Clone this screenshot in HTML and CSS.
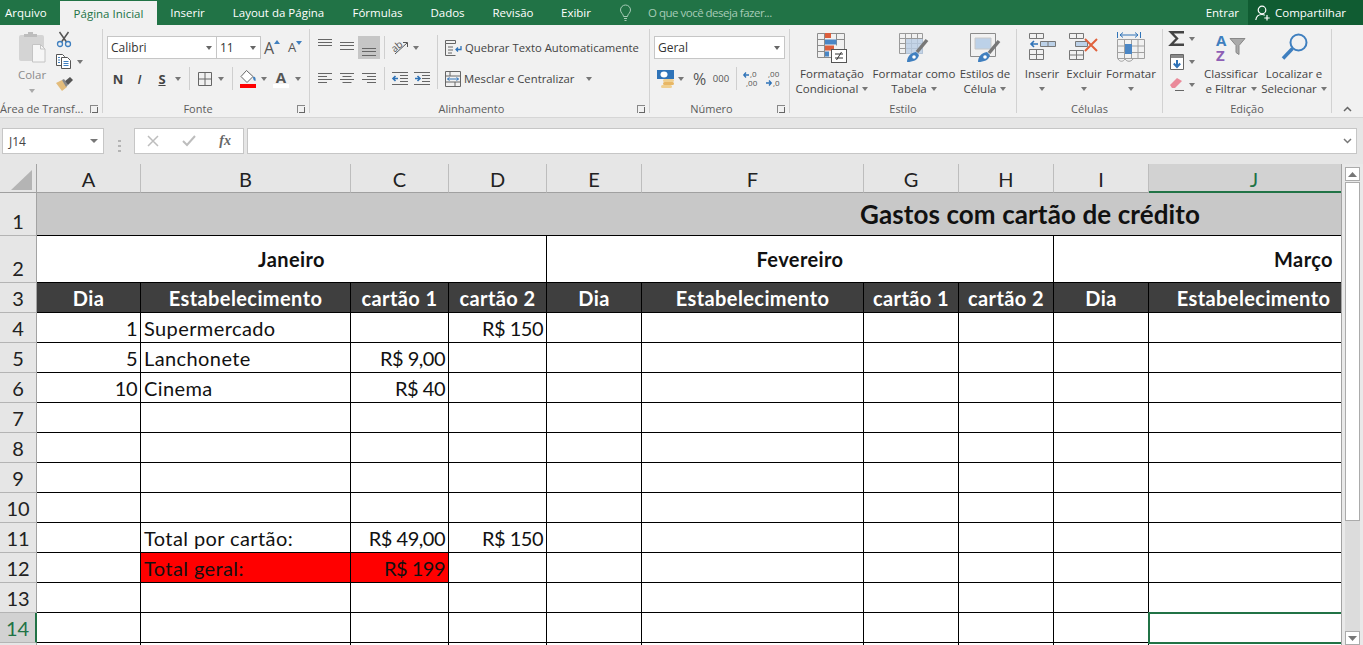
FILE: index.html
```html
<!DOCTYPE html>
<html lang="pt-BR">
<head>
<meta charset="utf-8">
<title>Gastos com cartão de crédito - Excel</title>
<link rel="stylesheet" href="styles.css">
</head>
<body>
<div class="app">
  <header class="titlebar">
    <nav class="tabs">
      <span class="tab tab-file">Arquivo</span>
      <span class="tab tab-active">Página Inicial</span>
      <span class="tab">Inserir</span>
      <span class="tab">Layout da Página</span>
      <span class="tab">Fórmulas</span>
      <span class="tab">Dados</span>
      <span class="tab">Revisão</span>
      <span class="tab">Exibir</span>
    </nav>
    <div class="tellme">
      <svg width="11" height="16" viewBox="0 0 11 16" fill="none" stroke="#a6cbb6"><path d="M3.5 11.5C3.5 9 .5 8 .5 5a5 5 0 0 1 10 0c0 3-3 4-3 6.5zM4 13.5h3M4.5 15.5h2"/></svg>
      <span>O que você deseja fazer...</span>
    </div>
    <div class="account">
      <span class="signin">Entrar</span>
      <span class="share">
        <svg width="16" height="16" viewBox="0 0 16 16" fill="none" stroke="#fff" stroke-width="1.2"><circle cx="7" cy="5" r="3.8"/><path d="M.8 15c.4-3.5 3-5.5 6.2-5.5 1.2 0 2 .2 2.8.7M12 10v5.5M9.3 13h5.4"/></svg>
        Compartilhar
      </span>
    </div>
  </header>

  <div class="ribbon">
    <section class="group g-clip">
      <div class="body clip-body">
        <div class="big paste">
          <svg class="big-icon" width="30" height="32" viewBox="0 0 30 32"><rect x="2" y="4" width="25" height="26" rx="2" fill="#d4d4d4"/><path d="M7 6V3h4V1h5v2h4v3z" fill="#bdbdbd"/><path d="M15.5 13.5h8l4.5 4.500V31h-12.500z" fill="#f6f6f6" stroke="#c4c4c4"/><path d="M23.500 13.500v4.500H28" fill="none" stroke="#c4c4c4"/></svg>
          <span class="muted">Colar</span>
          <i class="caret caret-low"></i>
        </div>
        <div class="stack">
          <div class="stack-row">
            <svg width="16" height="16" viewBox="0 0 16 16" fill="none"><path d="M3.500 1l7 10M12.500 1l-7 10" stroke="#555" stroke-width="1.500"/><circle cx="4" cy="13" r="2.500" stroke="#3f7fbf" stroke-width="1.300"/><circle cx="12" cy="13" r="2.500" stroke="#3f7fbf" stroke-width="1.300"/></svg>
          </div>
          <div class="stack-row copy-row">
            <svg width="16" height="15" viewBox="0 0 16 15" fill="#fff"><path d="M.5.5h6l2 2v9H.5z" stroke="#555"/><path d="M5.500 3.500h6l3 3v8h-9z" stroke="#555"/><path d="M2 3.500h2M2 6h2M2 8.500h2M7.500 7.500h5M7.500 9.500h5M7.500 11.500h5" stroke="#3f7fbf" fill="none"/></svg>
            <i class="caret"></i>
          </div>
          <div class="stack-row">
            <svg width="17" height="15" viewBox="0 0 17 15"><path d="M0 6l6-3 5 7-5 4z" fill="#e3bc7b"/><path d="M8 5l6-5 3 3-5 5z" fill="#555"/><path d="M6 3l2-1 4 6-2 2z" fill="#888"/></svg>
          </div>
        </div>
      </div>
      <div class="label label-launch label-clip">Área de Transf...<i class="launch"></i></div>
    </section>

    <section class="group g-font">
      <div class="body pad4">
        <div class="tool-row font-top">
          <span class="combo combo-font">Calibri<i class="caret"></i></span>
          <span class="combo combo-size">11<i class="caret"></i></span>
          <span class="grow-a">A<svg width="6" height="4" viewBox="0 0 6 4"><path d="M0 4l3-4 3 4z" fill="#3f7fbf"/></svg></span>
          <span class="shrink-a">A<svg width="6" height="4" viewBox="0 0 6 4"><path d="M0 0l3 4 3-4z" fill="#3f7fbf"/></svg></span>
        </div>
        <div class="tool-row font-bottom">
          <b class="fmt">N</b>
          <em class="fmt">I</em>
          <b class="fmt under">S</b>
          <i class="caret"></i>
          <i class="vsep"></i>
          <svg width="15" height="14" viewBox="0 0 15 14" fill="none" stroke="#666"><path d="M.5.5h13v13H.5zM7 .5v13M.5 7h13"/></svg>
          <i class="caret"></i>
          <i class="vsep"></i>
          <svg width="16" height="18" viewBox="0 0 16 18"><path d="M6.500.500l-5.500 6 6 6 6-6z" fill="#fff" stroke="#666"/><path d="M13 7c2-1 3 1 2.500 4-1 0-2.500-1-2.500-4z" fill="#3f7fbf"/><rect y="14" width="16" height="4" fill="#ff0000"/></svg>
          <i class="caret"></i>
          <span class="color-a">A<i></i></span>
          <i class="caret"></i>
        </div>
      </div>
      <div class="label label-launch">Fonte<i class="launch"></i></div>
    </section>

    <section class="group g-align">
      <div class="body pad4 align-body">
        <div class="align-tools">
          <div class="tool-row align-top">
            <svg class="lines" width="14" height="23" viewBox="0 0 14 23"><path d="M0 3.500h14M0 6.500h14M0 9.500h14"/></svg>
            <svg class="lines" width="14" height="23" viewBox="0 0 14 23"><path d="M0 6.500h14M0 9.500h14M0 13.500h14"/></svg>
            <span class="pressed"><svg class="lines" width="14" height="23" viewBox="0 0 14 23"><path d="M0 12.500h14M0 15.500h14M0 19.500h14"/></svg></span>
            <i class="vsep"></i>
            <svg width="16" height="15" viewBox="0 0 16 15" fill="none"><text x="0" y="10" transform="rotate(-40 5 8)" class="svg-small">ab</text><path d="M3 14L15 3M11 2.500h4.500V7" stroke="#555"/></svg>
            <i class="caret"></i>
          </div>
          <div class="tool-row align-bottom">
            <svg class="lines" width="14" height="12" viewBox="0 0 14 12"><path d="M0 .5h14M0 3.500h9M0 6.500h14M0 9.500h9"/></svg>
            <svg class="lines" width="14" height="12" viewBox="0 0 14 12"><path d="M0 .5h14M2.500 3.500h9M0 6.500h14M2.500 9.500h9"/></svg>
            <svg class="lines" width="14" height="12" viewBox="0 0 14 12"><path d="M0 .5h14M5 3.500h9M0 6.500h14M5 9.500h9"/></svg>
            <i class="vsep"></i>
            <svg width="16" height="13" viewBox="0 0 16 13" fill="none"><path d="M0 .5h16M8 3.500h8M8 6.500h8M8 9.500h8M0 12.500h16" stroke="#666"/><path d="M6 6.500H1M3.500 4L1 6.500 3.500 9" stroke="#2f73b8" stroke-width="1.600"/></svg>
            <svg width="16" height="13" viewBox="0 0 16 13" fill="none"><path d="M0 .5h16M8 3.500h8M8 6.500h8M8 9.500h8M0 12.500h16" stroke="#666"/><path d="M1 6.500h5M3.500 4L6 6.500 3.500 9" stroke="#2f73b8" stroke-width="1.600"/></svg>
          </div>
        </div>
        <i class="vsep vsep-tall"></i>
        <div class="wrap-tools">
          <div class="wrap-row">
            <svg width="17" height="16" viewBox="0 0 17 16" fill="none"><path d="M.5.5h10v3H.5zM.5 3.500v12h10M3 7h5M3 10h5M3 13h4" stroke="#666"/><path d="M16 6v3.500h-5M13 7.500l-2 2 2 2" stroke="#2f73b8" stroke-width="1.300"/></svg>
            <span>Quebrar Texto Automaticamente</span>
          </div>
          <div class="wrap-row">
            <svg width="16" height="16" viewBox="0 0 16 16" fill="none"><path d="M.5.5h15v15H.5zM.5 5h15M.5 11h15M5 .5V5M10 11v4.500" stroke="#666"/><path d="M2.500 8h11M4.500 6.500L2.500 8l2 1.500M11.500 6.500l2 1.500-2 1.500" stroke="#2f73b8"/></svg>
            <span class="merge-text">Mesclar e Centralizar</span>
            <i class="caret caret-merge"></i>
          </div>
        </div>
      </div>
      <div class="label label-launch">Alinhamento<i class="launch"></i></div>
    </section>

    <section class="group g-number">
      <div class="body pad4">
        <div class="tool-row">
          <span class="combo combo-number">Geral<i class="caret"></i></span>
        </div>
        <div class="tool-row number-bottom">
          <svg width="17" height="18" viewBox="0 0 17 18"><rect width="17" height="9" fill="#2f73b8"/><ellipse cx="7" cy="4.500" rx="3.500" ry="3" fill="#fff"/><rect x="6" y="9" width="11" height="3" rx="1.500" fill="#f0cf8f"/><rect x="6" y="12" width="11" height="3" rx="1.500" fill="#e8b765"/><rect x="4" y="15" width="11" height="3" rx="1.500" fill="#f0cf8f"/></svg>
          <i class="caret"></i>
          <span class="pct">%</span>
          <span class="thousand">000</span>
          <i class="vsep"></i>
          <svg width="16" height="17" viewBox="0 0 16 17" fill="none"><text x="7" y="7" class="svg-tiny">,0</text><text x="3" y="16" class="svg-tiny">,00</text><path d="M6 5H1M3 2.500L.8 5 3 7.500" stroke="#2f73b8" stroke-width="1.300"/></svg>
          <svg width="16" height="17" viewBox="0 0 16 17" fill="none"><text x="3" y="7" class="svg-tiny">,00</text><text x="8" y="16" class="svg-tiny">,0</text><path d="M1 13h5M4 10.500L6.300 13 4 15.500" stroke="#2f73b8" stroke-width="1.300"/></svg>
        </div>
      </div>
      <div class="label label-launch">Número<i class="launch"></i></div>
    </section>

    <section class="group g-style">
      <div class="body bigs bigs-style">
        <div class="big">
          <svg class="big-icon" width="30" height="30" viewBox="0 0 30 30" fill="none"><path d="M.5.5h27v24H.5zM7.500.5v24M19.500.5v12M.5 6.500h7M.5 12.500h7M.5 18.500h7M19.500 6.500h8" stroke="#8c8c8c"/><rect x="8" y="0" width="6" height="5" fill="#dc5f3d"/><rect x="8" y="6.500" width="11.500" height="5" fill="#4a86c5"/><rect x="8" y="12.500" width="9" height="5" fill="#dc5f3d"/><rect x="8" y="18.500" width="4" height="5" fill="#4a86c5"/><rect x="14.500" y="16.500" width="15" height="13" fill="#fff" stroke="#555"/><path d="M18 21h8M18 25h8M24.500 19l-5 8" stroke="#333"/></svg>
          <span>Formatação</span>
          <span>Condicional<i class="caret caret-inline"></i></span>
        </div>
        <div class="big">
          <svg class="big-icon" width="30" height="30" viewBox="0 0 30 30" fill="none"><path d="M.5.500h23v20H.5zM.5 5.500h23M.5 10.500h23M.5 15.500h23M6.500.500v20M12.500.500v20M18.500.500v20" stroke="#9a9a9a"/><path d="M7 6h17v15H7z" fill="#b9cde5" fill-opacity=".8"/><path d="M28 7L18 19" stroke="#777" stroke-width="3.500"/><path d="M8 29c0-5 3-9 9-10l3 3c-1 5-6 7-12 7z" fill="#3f7fbf"/><circle cx="15" cy="24" r="1.800" fill="#fff"/></svg>
          <span>Formatar como</span>
          <span>Tabela<i class="caret caret-inline"></i></span>
        </div>
        <div class="big">
          <svg class="big-icon" width="30" height="30" viewBox="0 0 30 30" fill="none"><path d="M.5.500h25v23H.5z" stroke="#8c8c8c"/><path d="M5 5h16v11H5z" fill="#bcd1e8" stroke="#c8c8c8"/><path d="M29 8L19 20" stroke="#777" stroke-width="3.500"/><path d="M8 29c0-5 3-9 9-10l3 3c-1 5-6 7-12 7z" fill="#3f7fbf"/><circle cx="15" cy="24" r="1.800" fill="#fff"/></svg>
          <span>Estilos de</span>
          <span>Célula<i class="caret caret-inline"></i></span>
        </div>
      </div>
      <div class="label">Estilo</div>
    </section>

    <section class="group g-cells">
      <div class="body bigs bigs-cells">
        <div class="big">
          <svg class="big-icon" width="27" height="27" viewBox="0 0 27 27" fill="none"><path d="M.5.500h14v5H.5zM7.500.500v5M.5 16.500h14v10H.5zM.5 21.500h14M7.500 16.500v10" stroke="#777"/><path d="M11.500 8.500h15v5h-15z" fill="#bcd1e8" stroke="#777"/><path d="M19 8.500v5" stroke="#777"/><path d="M9 11H2M5 8l-3 3 3 3" stroke="#2f73b8" stroke-width="1.600"/></svg>
          <span>Inserir</span>
          <i class="caret caret-center"></i>
        </div>
        <div class="big">
          <svg class="big-icon" width="30" height="27" viewBox="0 0 30 27" fill="none"><path d="M.5.500h14v5H.5zM7.500.500v5M.5 17.500h14v9H.5zM.5 22h14M7.500 17.500v9" stroke="#777"/><path d="M6.500 8.500h12v5h-12z" fill="#bcd1e8" stroke="#777"/><path d="M16 6l12 12M28 6L16 18" stroke="#e0623d" stroke-width="2"/></svg>
          <span>Excluir</span>
          <i class="caret caret-center"></i>
        </div>
        <div class="big">
          <svg class="big-icon" width="29" height="32" viewBox="0 0 29 32" fill="none"><path d="M.5 0v6M23.500 0v6M3 3h18M6 .5L3 3l3 2.500M18 .5L21 3l-3 2.500" stroke="#2f73b8"/><path d="M.5 7.500h27v19H.5zM.5 14h27M.5 20.500h27M7.500 7.500v19M14.500 7.500v19M21 7.500v19" stroke="#a0a0a0"/><rect x="8" y="12" width="7" height="10" fill="#4a86c5"/><path d="M1 27c2 3 5 3 7 0 2 3 6 3 8 0" stroke="#a0a0a0"/></svg>
          <span>Formatar</span>
          <i class="caret caret-center"></i>
        </div>
      </div>
      <div class="label">Células</div>
    </section>

    <section class="group g-edit">
      <div class="body bigs bigs-edit">
        <div class="stack stack-edit">
          <div class="stack-row">
            <svg width="16" height="15" viewBox="0 0 16 15" fill="none"><path d="M15 1.300H2l6 6.200-6 6.200h13" stroke="#444" stroke-width="2.400"/></svg>
            <i class="caret"></i>
          </div>
          <div class="stack-row">
            <svg width="16" height="16" viewBox="0 0 16 16" fill="#fff"><path d="M1.500.500h13v15h-13z" stroke="#666"/><rect x="2" y="1" width="12" height="3" fill="#888"/><path d="M8 6v7M4.800 9.500L8 13l3.200-3.500" fill="none" stroke="#2f73b8" stroke-width="2"/></svg>
            <i class="caret"></i>
          </div>
          <div class="stack-row">
            <svg width="16" height="14" viewBox="0 0 16 14" fill="none"><path d="M1 8l7-7 5 3-7 7H3z" fill="#ea8a9a"/><path d="M6 13.500h9" stroke="#666"/></svg>
            <i class="caret"></i>
          </div>
        </div>
        <div class="big">
          <svg class="big-icon" width="30" height="30" viewBox="0 0 30 30" fill="none"><text x="0" y="13" class="svg-az svg-a">A</text><text x="0" y="28" class="svg-az svg-z">Z</text><path d="M14 5.500h15l-6 7v9l-3-2v-7z" fill="#aaa" stroke="#888"/></svg>
          <span>Classificar</span>
          <span>e Filtrar<i class="caret caret-inline"></i></span>
        </div>
        <div class="big">
          <svg class="big-icon" width="27" height="30" viewBox="0 0 27 30" fill="none"><circle cx="17.500" cy="9.500" r="8" stroke="#3f7fbf" stroke-width="2"/><path d="M11.500 15.500L2 25.500" stroke="#3f7fbf" stroke-width="3.500"/></svg>
          <span>Localizar e</span>
          <span>Selecionar<i class="caret caret-inline"></i></span>
        </div>
      </div>
      <div class="label">Edição</div>
    </section>

    <svg class="collapse" width="9" height="6" viewBox="0 0 9 6" fill="none"><path d="M1 5l3.500-3.500L8 5" stroke="#666" stroke-width="1.500"/></svg>
  </div>

  <div class="formula">
    <div class="namebox">J14<i class="caret"></i></div>
    <svg class="grip" width="3" height="12" viewBox="0 0 3 12"><path d="M0 0h3v2H0zM0 5h3v2H0zM0 10h3v2H0z" fill="#b4b4b4"/></svg>
    <div class="fx-buttons">
      <svg width="12" height="12" viewBox="0 0 12 12" fill="none"><path d="M1 1l10 10M11 1L1 11" stroke="#bdbdbd" stroke-width="1.500"/></svg>
      <svg width="14" height="12" viewBox="0 0 14 12" fill="none"><path d="M1 6l4 4 8-9" stroke="#bdbdbd" stroke-width="2"/></svg>
      <span class="fx">fx</span>
    </div>
    <div class="fx-input">
      <svg width="9" height="6" viewBox="0 0 9 6" fill="none"><path d="M1 1l3.500 3.500L8 1" stroke="#777" stroke-width="1.500"/></svg>
    </div>
  </div>

  <div class="sheet-area">
    <div class="sheet">
      <table class="grid">
        <colgroup>
          <col class="c-head"><col class="c-a"><col class="c-b"><col class="c-c"><col class="c-d"><col class="c-e"><col class="c-f"><col class="c-g"><col class="c-h"><col class="c-i"><col class="c-j">
        </colgroup>
        <thead>
          <tr class="r-cols">
            <th class="corner"><svg width="22" height="21" viewBox="0 0 22 21"><path d="M21 0v20H0z" fill="#b4b4b4"/></svg></th>
            <th>A</th><th>B</th><th>C</th><th>D</th><th>E</th><th>F</th><th>G</th><th>H</th><th>I</th><th class="col-selected">J</th>
          </tr>
        </thead>
        <tbody>
          <tr class="r-title">
            <th>1</th>
            <td class="title" colspan="10">Gastos com cartão de crédito</td>
          </tr>
          <tr class="r-months">
            <th>2</th>
            <td class="month" colspan="4">Janeiro</td>
            <td class="month" colspan="4">Fevereiro</td>
            <td class="month month-last" colspan="2">Março</td>
          </tr>
          <tr class="r-row r-heads">
            <th>3</th>
            <td>Dia</td><td>Estabelecimento</td><td>cartão 1</td><td>cartão 2</td>
            <td>Dia</td><td>Estabelecimento</td><td>cartão 1</td><td>cartão 2</td>
            <td>Dia</td><td>Estabelecimento</td>
          </tr>
          <tr class="r-row">
            <th>4</th>
            <td class="num">1</td><td>Supermercado</td><td></td><td class="num">R$ 150</td>
            <td></td><td></td><td></td><td></td><td></td><td></td>
          </tr>
          <tr class="r-row">
            <th>5</th>
            <td class="num">5</td><td>Lanchonete</td><td class="num">R$ 9,00</td><td></td>
            <td></td><td></td><td></td><td></td><td></td><td></td>
          </tr>
          <tr class="r-row">
            <th>6</th>
            <td class="num">10</td><td>Cinema</td><td class="num">R$ 40</td><td></td>
            <td></td><td></td><td></td><td></td><td></td><td></td>
          </tr>
          <tr class="r-row"><th>7</th><td></td><td></td><td></td><td></td><td></td><td></td><td></td><td></td><td></td><td></td></tr>
          <tr class="r-row"><th>8</th><td></td><td></td><td></td><td></td><td></td><td></td><td></td><td></td><td></td><td></td></tr>
          <tr class="r-row"><th>9</th><td></td><td></td><td></td><td></td><td></td><td></td><td></td><td></td><td></td><td></td></tr>
          <tr class="r-row"><th>10</th><td></td><td></td><td></td><td></td><td></td><td></td><td></td><td></td><td></td><td></td></tr>
          <tr class="r-row">
            <th>11</th>
            <td></td><td>Total por cartão:</td><td class="num">R$ 49,00</td><td class="num">R$ 150</td>
            <td></td><td></td><td></td><td></td><td></td><td></td>
          </tr>
          <tr class="r-row">
            <th>12</th>
            <td></td><td class="red">Total geral:</td><td class="num red">R$ 199</td><td></td>
            <td></td><td></td><td></td><td></td><td></td><td></td>
          </tr>
          <tr class="r-row"><th>13</th><td></td><td></td><td></td><td></td><td></td><td></td><td></td><td></td><td></td><td></td></tr>
          <tr class="r-row">
            <th class="row-selected">14</th>
            <td></td><td></td><td></td><td></td><td></td><td></td><td></td><td></td><td></td><td class="active-cell"></td>
          </tr>
          <tr class="r-row"><th>15</th><td></td><td></td><td></td><td></td><td></td><td></td><td></td><td></td><td></td><td></td></tr>
        </tbody>
      </table>
    </div>
    <aside class="scrollbar">
      <div class="sb-btn"><svg width="9" height="5" viewBox="0 0 9 5"><path d="M0 5l4.500-5L9 5z" fill="#777"/></svg></div>
      <div class="sb-thumb"></div>
      <div class="sb-track"></div>
      <div class="sb-btn"><svg width="9" height="5" viewBox="0 0 9 5"><path d="M0 0l4.500 5L9 0z" fill="#777"/></svg></div>
    </aside>
  </div>
</div>
</body>
</html>
```
FILE: styles.css
```css
* { box-sizing: border-box; }
html, body { margin: 0; height: 100%; overflow: hidden; }
body { font-family: "Open Sans", "Noto Sans", sans-serif; font-size: 11.5px; color: #444; }
i { font-style: normal; }
svg { overflow: visible; }
.app { display: flex; flex-direction: column; width: 1363px; height: 645px; overflow: hidden; background: #e6e6e6; }

/* title bar */
.titlebar { display: flex; height: 25px; background: #217346; color: #fff; flex: none; }
.tabs { display: grid; grid-template-columns: 60px 97px 61px 121px 77px 63px 68px 58px; }
.tab { display: flex; align-items: center; justify-content: center; height: 25px; }
.tab-file { justify-content: flex-start; padding-left: 5px; }
.tab-active { margin-top: 1px; height: 24px; background: #f1f1f1; color: #217346; }
.tellme { display: flex; align-items: center; gap: 17px; padding-left: 15px; color: #a6cbb6; letter-spacing: -.5px; }
.account { display: flex; align-items: center; margin-left: auto; }
.signin { margin-right: 9px; }
.share { display: flex; align-items: center; gap: 4px; width: 115px; height: 25px; padding-left: 7px; background: #105c32; }

/* ribbon */
.ribbon { display: flex; height: 93px; flex: none; padding-top: 4px; background: #f1f1f1; border-bottom: 1px solid #d6d6d6; }
.group { display: flex; flex-direction: column; height: 84px; border-right: 1px solid #d2d2d2; }
.g-clip { width: 103px; }
.g-font { width: 207px; }
.g-align { width: 340px; }
.g-number { width: 140px; }
.g-style { width: 227px; }
.g-cells { width: 146px; }
.g-edit { width: 169px; }
.body { height: 73px; }
.pad4 { padding: 7px 0 0 4px; }
.label { position: relative; height: 11px; line-height: 13px; text-align: center; color: #5c5c5c; font-size: 11px; white-space: nowrap; }
.label-launch { padding-right: 16px; }
.label-clip { text-align: left; }
.launch { position: absolute; right: 4px; top: 3px; width: 8px; height: 8px; border-left: 1px solid #888; border-top: 1px solid #888; }
.launch::after { content: ""; position: absolute; right: 0; bottom: 0; width: 5px; height: 5px; border-right: 1px solid #666; border-bottom: 1px solid #666; }

.caret { display: block; width: 0; height: 0; border: 3px solid transparent; border-top: 4px solid #777; border-bottom: 0; flex: none; }
.caret-inline { display: inline-block; margin-left: 4px; vertical-align: 2px; }
.caret-center, .caret-low { margin-top: 6px; }
.caret-low { border-top-color: #aaa; margin-top: 7px; }
.vsep { display: block; width: 1px; height: 23px; background: #cfcfcf; }

.tool-row { display: grid; align-items: center; justify-items: center; height: 23px; }
.tool-row + .tool-row { margin-top: 8px; }

/* large buttons */
.big { display: flex; flex-direction: column; align-items: center; line-height: 15px; white-space: nowrap; color: #444; }
.big-icon { display: block; margin-bottom: 3px; }
.bigs { display: grid; padding-top: 4px; }
.bigs-style { grid-template-columns: 80px 84px 58px; padding-left: 2px; }
.bigs-cells { grid-template-columns: 42px 42px 52px; padding-left: 4px; }
.bigs-cells .big-icon { margin-bottom: 6px; }
.bigs-cells .big:last-child .big-icon { margin-bottom: 2px; margin-top: -1px; }
.bigs-edit { grid-template-columns: 30px 64px 62px; padding-left: 6px; }

/* clipboard */
.clip-body { display: grid; grid-template-columns: 48px 40px; padding: 2px 0 0 8px; }
.paste .big-icon { margin-bottom: 4px; }
.muted { color: #8c8c8c; }
.stack { display: flex; flex-direction: column; }
.stack-row { display: flex; align-items: flex-start; gap: 5px; height: 23px; }
.copy-row .caret { margin-top: 6px; }
.stack-edit { margin-top: -2px; }
.stack-edit .stack-row { gap: 4px; }
.stack-edit .caret { margin-top: 6px; }

/* font group */
.font-top { grid-template-columns: 110px 44px 22px 24px; }
.font-bottom { grid-template-columns: 22px 21px 24px 8px 15px 16px 16px 7px 24px 8px 26px 8px; }
.combo { display: flex; align-items: center; justify-content: space-between; justify-self: stretch; height: 23px; padding: 0 4px 0 3px; background: #fff; border: 1px solid #c6c6c6; color: #333; font-size: 12px; }
.combo-size { margin-left: -1px; }
.combo .caret { border-top-color: #666; }
.grow-a, .shrink-a { display: flex; align-items: flex-start; color: #555; line-height: 1; }
.grow-a { font-size: 16px; }
.shrink-a { font-size: 13px; }
.fmt { font-size: 13px; color: #444; font-style: normal; }
em.fmt { font-style: italic; font-weight: 600; }
.under { text-decoration: underline; }
.color-a { display: flex; flex-direction: column; align-items: center; font-size: 15px; font-weight: 700; line-height: 14px; color: #555; }
.color-a i { display: block; width: 16px; height: 4px; background: #fff; }

/* alignment group */
.align-body { display: flex; }
.align-tools { width: 123px; }
.align-top { grid-template-columns: 22px 22px 22px 8px 24px 8px; width: 106px; }
.align-bottom { grid-template-columns: 22px 22px 22px 8px 24px 20px; width: 118px; }
.lines { stroke: #666; fill: none; }
.pressed { display: flex; justify-content: center; width: 22px; height: 23px; background: #c6c6c6; }
.vsep-tall { height: 54px; margin-top: -1px; }
.wrap-tools { padding-left: 7px; }
.wrap-row { display: flex; align-items: center; gap: 3px; height: 23px; white-space: nowrap; font-size: 11.3px; }
.wrap-row + .wrap-row { margin-top: 8px; }
.caret-merge { margin-left: 9px; }

/* number group */
.combo-number { width: 131px; justify-self: start; }
.number-bottom { grid-template-columns: 22px 10px 27px 16px 14px 16px 28px; }
.pct { font-size: 16px; color: #555; }
.thousand { font-size: 9.5px; color: #555; }
.svg-tiny { font: 8px "Open Sans", sans-serif; fill: #555; }
.svg-small { font: 10px "Open Sans", sans-serif; fill: #555; }
.svg-az { font: 700 15px "Open Sans", sans-serif; }
.svg-a { fill: #3f7fbf; }
.svg-z { fill: #8e5fb5; }

.collapse { align-self: flex-end; margin: 0 11px 5px auto; }

/* formula bar */
.formula { display: flex; height: 46px; flex: none; padding: 10px 6px 0 2px; }
.namebox, .fx-buttons, .fx-input { display: flex; align-items: center; height: 26px; background: #fff; border: 1px solid #c6c6c6; }
.namebox { justify-content: space-between; width: 102px; padding: 0 5px 0 6px; font-size: 12px; }
.namebox .caret { border-width: 4px; border-top-width: 4px; border-bottom: 0; border-top-color: #777; }
.grip { align-self: center; margin: 0 13px 0 14px; }
.fx-buttons { justify-content: space-between; width: 110px; padding: 0 12px; }
.fx { font: italic 700 14px "Liberation Serif", serif; color: #666; }
.fx-input { flex: 1; justify-content: flex-end; margin-left: 3px; padding-right: 4px; }

/* sheet */
.sheet-area { display: flex; flex: 1; min-height: 0; }
.sheet { width: 1342px; flex: none; overflow: hidden; background: #fff; border-right: 1px solid #a3a3a3; }
.grid { table-layout: fixed; width: 1359px; border-collapse: separate; border-spacing: 0; font-family: Lato, "Liberation Sans", sans-serif; font-size: 20px; color: #111; }
.c-head { width: 37px; }
.c-a { width: 104px; }
.c-b { width: 210px; }
.c-c { width: 98px; }
.c-d { width: 98px; }
.c-e { width: 95px; }
.c-f { width: 222px; }
.c-g { width: 95px; }
.c-h { width: 95px; }
.c-i { width: 95px; }
.c-j { width: 210px; }
.grid td, .grid th { padding: 0; overflow: visible; white-space: nowrap; }
.grid th { font-weight: 400; background: #e6e6e6; color: #222; border-right: 1px solid #a3a3a3; border-bottom: 1px solid #b4b4b4; }
.r-cols th { height: 29px; padding-top: 2px; border-right-color: #bdbdbd; border-bottom-color: #a0a0a0; vertical-align: middle; }
.r-cols .corner { text-align: right; padding: 0 3px 1px 0; border-right-color: #a3a3a3; line-height: 0; vertical-align: bottom; }
.col-selected.col-selected { background: #d2d2d2; color: #217346; border-bottom: 2px solid #217346; border-right: 0; }
.row-selected.row-selected { background: #d2d2d2; color: #217346; border-right: 2px solid #217346; }
.grid tbody th { vertical-align: bottom; line-height: 28px; }
.grid td { padding: 0 3px; border-right: 1px solid #000; border-bottom: 1px solid #000; vertical-align: bottom; line-height: 28px; letter-spacing: .4px; }
.grid td.num { text-align: right; padding-right: 3px; letter-spacing: -.5px; }
.grid .title { background: #c8c8c8; font-weight: 700; font-size: 26px; padding-left: 823px; vertical-align: middle; letter-spacing: .1px; }
.r-title th, .r-title td { height: 43px; }
.r-months th, .r-months td { height: 47px; }
.grid .month { text-align: center; font-weight: 700; vertical-align: middle; line-height: 24px; }
.grid .month-last { text-align: right; padding-right: 25px; }
.r-row th, .r-row td { height: 30px; }
.grid .r-heads td { background: #3f3f3f; color: #fff; font-weight: 700; text-align: center; }
.grid .red { background: #ff0000; }
.grid .active-cell { outline: 2px solid #217346; outline-offset: -1px; }

/* scrollbar */
.scrollbar { display: flex; flex-direction: column; flex: 1; padding: 3px 3px 0; background: #e9e9e9; }
.sb-btn { display: flex; align-items: center; justify-content: center; height: 14px; flex: none; background: #fff; border: 1px solid #ababab; }
.sb-thumb { height: 339px; flex: none; margin-top: 1px; background: #fff; border: 1px solid #ababab; }
.sb-track { flex: 1; background: #dcdcdc; }
```
